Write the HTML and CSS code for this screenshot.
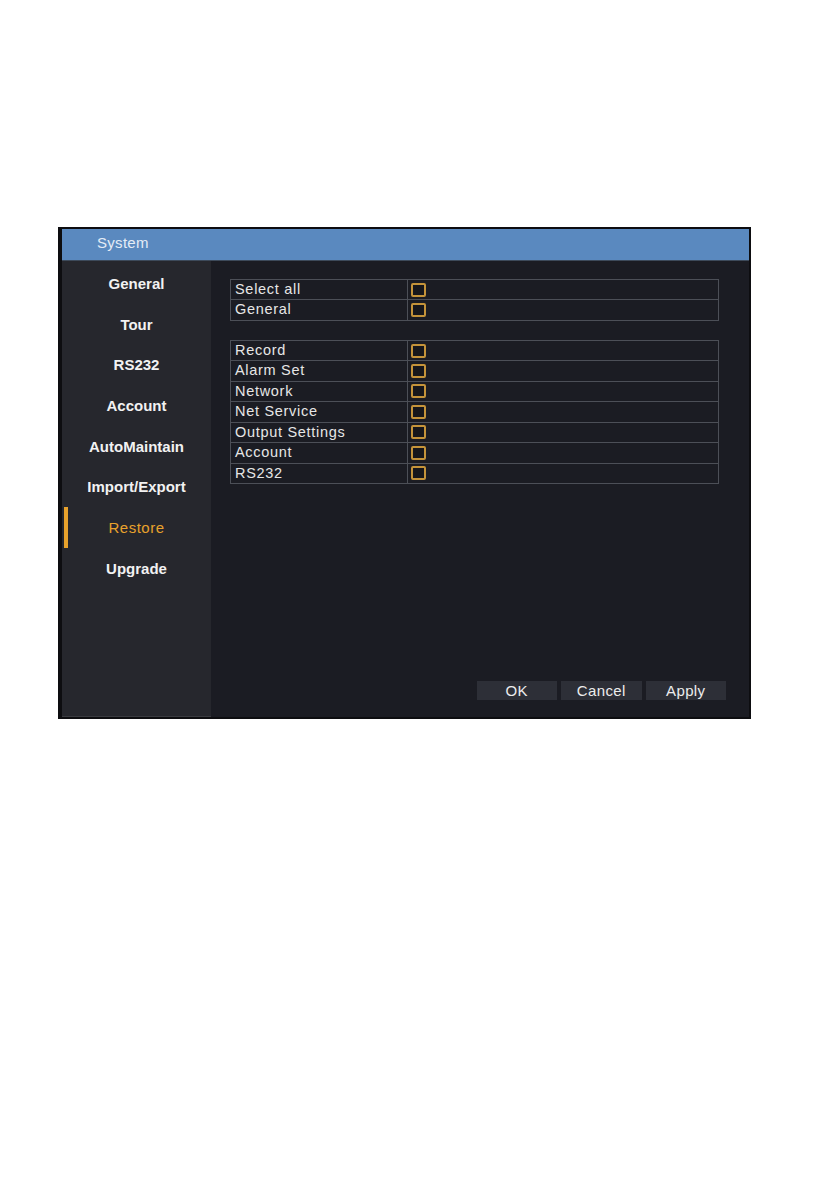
FILE: index.html
```html
<!DOCTYPE html>
<html>
<head>
<meta charset="utf-8">
<link rel="stylesheet" href="styles.css">
</head>
<body>
<div class="page">
  <div class="frame">
    <div class="titlebar">System</div>
    <div class="main">
      <nav class="sidebar">
        <div class="nav-item">General</div>
        <div class="nav-item">Tour</div>
        <div class="nav-item">RS232</div>
        <div class="nav-item">Account</div>
        <div class="nav-item">AutoMaintain</div>
        <div class="nav-item">Import/Export</div>
        <div class="nav-item active">Restore</div>
        <div class="nav-item">Upgrade</div>
      </nav>
      <section class="content">
        <div class="table">
          <div class="row"><div class="label">Select all</div><div class="cell"><span class="check"></span></div></div>
          <div class="row"><div class="label">General</div><div class="cell"><span class="check"></span></div></div>
        </div>
        <div class="table second">
          <div class="row"><div class="label">Record</div><div class="cell"><span class="check"></span></div></div>
          <div class="row"><div class="label">Alarm Set</div><div class="cell"><span class="check"></span></div></div>
          <div class="row"><div class="label">Network</div><div class="cell"><span class="check"></span></div></div>
          <div class="row"><div class="label">Net Service</div><div class="cell"><span class="check"></span></div></div>
          <div class="row"><div class="label">Output Settings</div><div class="cell"><span class="check"></span></div></div>
          <div class="row"><div class="label">Account</div><div class="cell"><span class="check"></span></div></div>
          <div class="row"><div class="label">RS232</div><div class="cell"><span class="check"></span></div></div>
        </div>
        <div class="buttons">
          <div class="btn">OK</div>
          <div class="btn">Cancel</div>
          <div class="btn">Apply</div>
        </div>
      </section>
    </div>
  </div>
</div>
</body>
</html>
```

FILE: styles.css
```css
html, body {
  margin: 0;
  padding: 0;
  background: #ffffff;
}

body {
  font-family: "Liberation Sans", Arial, sans-serif;
}

.page {
  padding: 227px 0 0 58px;
}

.frame {
  width: 693px;
  height: 492px;
  box-sizing: border-box;
  background: #0d0d10;
  padding: 2px 2px 2px 4px;
  display: flex;
  flex-direction: column;
}

.titlebar {
  height: 32px;
  flex: none;
  background: #5a89bf;
  color: #e4ecf6;
  font-size: 15px;
  letter-spacing: 0.3px;
  line-height: 28px;
  padding-left: 35px;
  border-bottom: 1px solid #3d4a5a;
  box-sizing: border-box;
}

.main {
  flex: 1;
  display: flex;
  min-height: 0;
}

.sidebar {
  width: 149px;
  flex: none;
  background: #26272d;
  padding-top: 2px;
  box-sizing: border-box;
  border-bottom: 1px solid #3a3b40;
}

.nav-item {
  height: 40.7px;
  display: flex;
  align-items: center;
  justify-content: center;
  color: #f2f2f2;
  font-weight: bold;
  font-size: 15px;
  position: relative;
}

.nav-item.active {
  color: #e8a22c;
  font-weight: normal;
  letter-spacing: 0.5px;
}

.nav-item.active::before {
  content: "";
  position: absolute;
  left: 2px;
  top: 0;
  bottom: 0;
  width: 4px;
  background: #e8a22c;
}

.content {
  flex: 1;
  background: #1b1c23;
  padding: 18px 23px 17px 19px;
  display: flex;
  flex-direction: column;
  box-sizing: border-box;
}

.table {
  margin-right: 7px;
  border: 1px solid #4c4f57;
  border-top: none;
}

.table.second {
  margin-top: 19px;
}

.row {
  display: grid;
  grid-template-columns: 177px 1fr;
  height: 20.45px;
  box-sizing: border-box;
  border-top: 1px solid #4c4f57;
}

.label {
  border-right: 1px solid #4c4f57;
  color: #e6e6e6;
  font-size: 14.5px;
  letter-spacing: 0.7px;
  line-height: 19px;
  padding-left: 4px;
  white-space: nowrap;
}

.cell {
  display: flex;
  align-items: center;
  padding-left: 3px;
}

.check {
  width: 15px;
  height: 14px;
  box-sizing: border-box;
  border: 2px solid #c4933a;
  border-radius: 2px;
  background: #17171b;
}

.buttons {
  margin-top: auto;
  display: flex;
  justify-content: flex-end;
  gap: 4px;
}

.btn {
  width: 80.5px;
  height: 19px;
  background: #2d2f37;
  color: #ececec;
  font-size: 15px;
  letter-spacing: 0.4px;
  line-height: 19px;
  text-align: center;
}
```
